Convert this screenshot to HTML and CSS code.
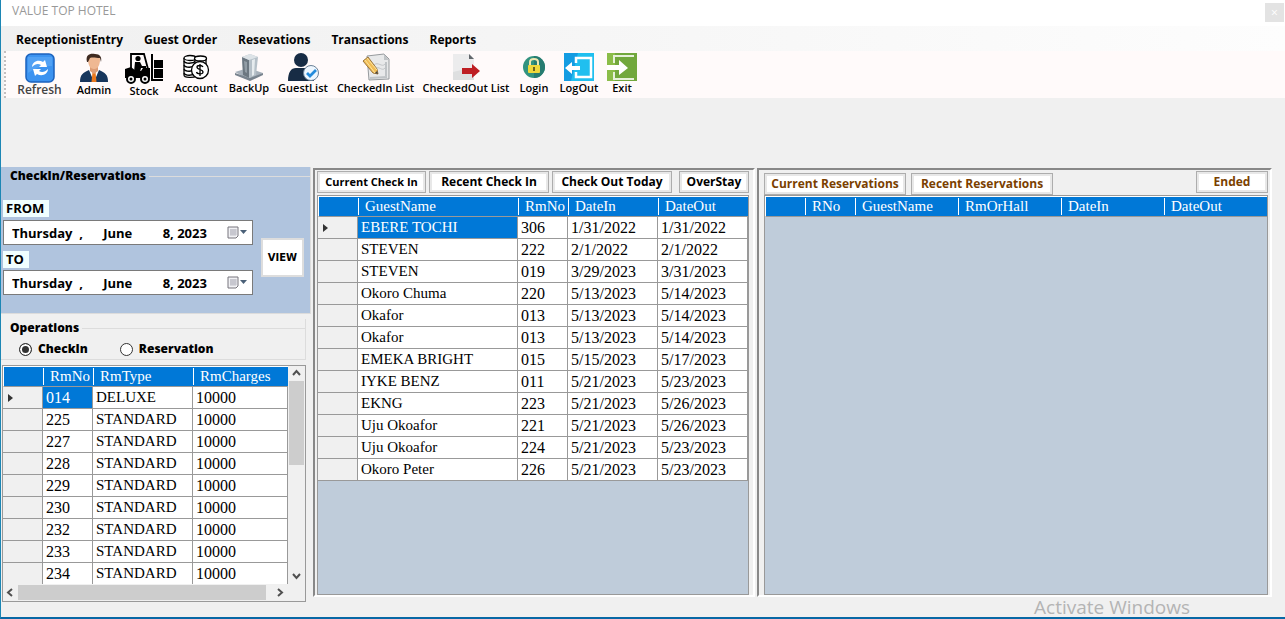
FILE: index.html
```html
<!DOCTYPE html>
<html lang="en">
<head>
<meta charset="UTF-8" />
<meta name="viewport" content="width=device-width, initial-scale=1" />
<title>VALUE TOP HOTEL</title>
<link rel="stylesheet" href="styles.css">
</head>
<body>

<div class="window">
  <header class="titlebar">
    <h1>VALUE TOP HOTEL</h1>
    <button type="button" class="close" aria-label="Close">×</button>
  </header>

  <nav class="menu">
    <a href="#">ReceptionistEntry</a>
    <a href="#">Guest Order</a>
    <a href="#">Resevations</a>
    <a href="#">Transactions</a>
    <a href="#">Reports</a>
  </nav>

  <div class="toolbar">
    <button type="button" class="tool refresh">
      <svg width="30" height="30" viewBox="0 0 30 30">
        <rect x="1" y="1" width="28" height="28" rx="5" fill="#3c93f0" stroke="#1b62bd" stroke-width="1.5"/>
        <path d="M3 4h24v9Q14 12 3 20z" fill="#65b0f8" opacity=".5"/>
        <path d="M7 14c0-5 6-8 11-5l2-2 2 7h-8l2-2c-3-2-6-1-9 2zM23 16c0 5-6 8-11 5l-2 2-2-7h8l-2 2c3 2 6 1 9-2z" fill="#fff"/>
      </svg>
      <span>Refresh</span>
    </button>
    <button type="button" class="tool">
      <svg width="30" height="30" viewBox="0 0 30 30">
        <path d="M1 29c0-8 3-9 9-12h10c6 3 9 4 9 12z" fill="#17365c"/>
        <path d="M10 17l5 12 5-12z" fill="#fff"/>
        <path d="M13.500 19h3l1 10h-5z" fill="#e8781e"/>
        <path d="M11 13h8v5l-4 3-4-3z" fill="#dc9d76"/>
        <path d="M9 6c0-6 12-6 12 0 0 6-2 10-6 10S9 12 9 6z" fill="#efb892"/>
        <path d="M8 9C6 1 12 0 16 1c5 0 7 3 6 8l-1-4c-4 0-7-1-10 0L9 9z" fill="#3f2a20"/>
      </svg>
      <span>Admin</span>
    </button>
    <button type="button" class="tool">
      <svg width="40" height="31" viewBox="0 0 40 31">
        <path d="M7 15V1h13l4 15" fill="none" stroke="#000" stroke-width="1.8"/>
        <circle cx="14" cy="5.500" r="2.600"/>
        <path d="M11 9h5l2 4h4v2h-5l-1 4h-6z"/>
        <path d="M1 16l6-2 5 4h5l2-3h7v10H1z"/>
        <path d="M27 1h2v25h10v2H27z"/>
        <path d="M30 7h9v8h-9zM30 16h9v9h-9z"/>
        <circle cx="7" cy="26" r="4" fill="#fff" stroke="#000" stroke-width="2"/><circle cx="7" cy="26" r="1.500"/>
        <circle cx="21" cy="26" r="4" fill="#fff" stroke="#000" stroke-width="2"/><circle cx="21" cy="26" r="1.500"/>
      </svg>
      <span>Stock</span>
    </button>
    <button type="button" class="tool">
      <svg width="28" height="28" viewBox="0 0 28 28" fill="#fff" stroke="#000" stroke-width="1.300">
        <path d="M2 5v17c0 3 10 3 12 1V5"/>
        <path d="M2 8c1 3 9 3 12 0M2 12c1 3 9 3 12 0M2 16c1 3 9 3 12 0M2 20c1 3 9 3 12 0" fill="none"/>
        <ellipse cx="8" cy="5" rx="6" ry="2.500"/>
        <path d="M13 6v5h11V6" /><ellipse cx="18.500" cy="5.500" rx="6" ry="2.500"/>
        <circle cx="18" cy="17" r="8.500"/>
        <path d="M21 14c-1-2-6-2-6 0 0 3 6 2 6 5 0 3-6 2-6.500 0M18 11v12" fill="none"/>
      </svg>
      <span>Account</span>
    </button>
    <button type="button" class="tool">
      <svg width="30" height="28" viewBox="0 0 30 28">
        <path d="M1 19l13-4 15 5-13 7z" fill="#a6b0ba"/>
        <path d="M1 20l15 5 13-5v2l-13 6-15-6z" fill="#78838e"/>
        <path d="M8 4l8-3 8 3-2 18-7 3-6-3z" fill="#b6c0c8"/>
        <path d="M8 4l7 3v18l-6-3z" fill="#6c7781"/>
        <path d="M8 4l8-3 8 3-9 3z" fill="#dde3e7"/>
        <path d="M18 7l3-1-1 16-2 1z" fill="#e6ebee"/>
        <path d="M10 8l3 1v11l-2-1z" fill="#929da6"/>
      </svg>
      <span>BackUp</span>
    </button>
    <button type="button" class="tool">
      <svg width="31" height="28" viewBox="0 0 31 28">
        <circle cx="13" cy="7" r="7" fill="#172c45"/>
        <path d="M0 28c0-9 3-13 8-13h10c5 0 8 4 8 13z" fill="#172c45"/>
        <circle cx="23" cy="20" r="7.500" fill="#eef7ff" stroke="#6c8298"/>
        <path d="M19 20l3 3 6-6" fill="none" stroke="#248bdb" stroke-width="2.800"/>
      </svg>
      <span>GuestList</span>
    </button>
    <button type="button" class="tool">
      <svg width="28" height="28" viewBox="0 0 28 28">
        <path d="M5 3l17-2 5 5v20l-20 1z" fill="#e8e9ea" stroke="#969a9d"/>
        <path d="M22 1v6h5z" fill="#bfc3c6"/>
        <path d="M8 25l17-1M24 9v14" stroke="#bfc3c6" stroke-width="2"/>
        <path d="M12 12c4-4 8 3 11-1M13 16c4-4 7 3 10-1" stroke="#c3c6c9" fill="none"/>
        <path d="M1 8l5-4 9 12 1 5-5-1z" fill="#f1bd55" stroke="#99733b"/>
        <path d="M3 7l10 13M5 5l10 12" stroke="#ffe5a0"/>
        <path d="M13 20l3 1-1-3z" fill="#444"/>
      </svg>
      <span>CheckedIn List</span>
    </button>
    <button type="button" class="tool">
      <svg width="28" height="28" viewBox="0 0 28 28">
        <path d="M1 1h16l5 5v21H1z" fill="#dedfe0"/>
        <path d="M1 1h16l5 5v8L1 19z" fill="#ececed"/>
        <path d="M17 1v5h5z" fill="#62676c"/>
        <path d="M10 15h10v-4l8 7-8 7v-4H10z" fill="#be1e23"/>
      </svg>
      <span>CheckedOut List</span>
    </button>
    <button type="button" class="tool">
      <svg width="26" height="28" viewBox="0 0 26 28">
        <circle cx="13" cy="14" r="11" fill="#32937f"/>
        <path d="M13 3a11 11 0 0 1 0 22z" fill="#267b70"/>
        <path d="M9 13V9c0-4 8-4 8 0v4" fill="none" stroke="#eee7b1" stroke-width="2"/>
        <rect x="7" y="12" width="12" height="8" rx="1" fill="#efd83a"/>
        <path d="M13 14v4" stroke="#6b651f" stroke-width="2"/>
      </svg>
      <span>Login</span>
    </button>
    <button type="button" class="tool">
      <svg width="30" height="28" viewBox="0 0 30 28">
        <rect width="30" height="28" fill="#149ce2"/>
        <path d="M14 0h16v28H7z" fill="#20bfef"/>
        <path d="M12 10V5h15v19H12v-5" fill="none" stroke="#fff" stroke-width="2.500"/>
        <path d="M1 15l7-6v4h8v4H8v4z" fill="#fff"/>
      </svg>
      <span>LogOut</span>
    </button>
    <button type="button" class="tool">
      <svg width="30" height="28" viewBox="0 0 30 28">
        <rect width="30" height="28" fill="#72a83d"/>
        <path d="M0 0h8v28H0z" fill="#8bbd49"/>
        <path d="M7 10V3h20M7 19v7h20" fill="none" stroke="#e7f1da" stroke-width="2"/>
        <path d="M0 12h12V7l9 8-9 7v-5H0z" fill="#fff"/>
      </svg>
      <span>Exit</span>
    </button>
  </div>

  <main class="content">
    <section class="side">
      <fieldset class="dates">
        <legend>CheckIn/Reservations</legend>
        <div class="dates-fields">
          <label for="from">FROM</label>
          <div class="datebox">
            <input type="text" id="from" value="Thursday  ,      June         8, 2023">
            <button type="button" aria-label="Pick from date">
              <svg width="20" height="14" viewBox="0 0 20 14"><path d="M1 1h10v9l-2 2H1z" fill="#f1f1f4" stroke="#77757c"/><path d="M3 4h7M3 6h7M3 8h7M4 3v7M6 3v7M8 3v7" stroke="#aaa9b5" stroke-width=".7"/><path d="M13 4h7l-3.500 4z" fill="#4b6178"/></svg>
            </button>
          </div>
          <label for="to">TO</label>
          <div class="datebox">
            <input type="text" id="to" value="Thursday  ,      June         8, 2023">
            <button type="button" aria-label="Pick to date">
              <svg width="20" height="14" viewBox="0 0 20 14"><path d="M1 1h10v9l-2 2H1z" fill="#f1f1f4" stroke="#77757c"/><path d="M3 4h7M3 6h7M3 8h7M4 3v7M6 3v7M8 3v7" stroke="#aaa9b5" stroke-width=".7"/><path d="M13 4h7l-3.500 4z" fill="#4b6178"/></svg>
            </button>
          </div>
        </div>
        <button type="button" class="view">VIEW</button>
      </fieldset>

      <fieldset class="operations">
        <legend>Operations</legend>
        <label><input type="radio" name="operation" checked>CheckIn</label>
        <label><input type="radio" name="operation">Reservation</label>
      </fieldset>

      <div class="rooms">
        <div class="rooms-view">
          <table class="grid">
            <colgroup><col class="w40"><col class="w50"><col class="w100"><col></colgroup>
            <thead>
              <tr><th></th><th><span>RmNo</span></th><th><span>RmType</span></th><th><span>RmCharges</span></th></tr>
            </thead>
            <tbody>
              <tr><td class="current"></td><td class="num selected">014</td><td>DELUXE</td><td class="num">10000</td></tr>
              <tr><td></td><td class="num">225</td><td>STANDARD</td><td class="num">10000</td></tr>
              <tr><td></td><td class="num">227</td><td>STANDARD</td><td class="num">10000</td></tr>
              <tr><td></td><td class="num">228</td><td>STANDARD</td><td class="num">10000</td></tr>
              <tr><td></td><td class="num">229</td><td>STANDARD</td><td class="num">10000</td></tr>
              <tr><td></td><td class="num">230</td><td>STANDARD</td><td class="num">10000</td></tr>
              <tr><td></td><td class="num">232</td><td>STANDARD</td><td class="num">10000</td></tr>
              <tr><td></td><td class="num">233</td><td>STANDARD</td><td class="num">10000</td></tr>
              <tr><td></td><td class="num">234</td><td>STANDARD</td><td class="num">10000</td></tr>
            </tbody>
          </table>
        </div>
        <div class="vscroll">
          <svg width="15" height="15" viewBox="0 0 15 15"><path d="M4 9l3.500-4L11 9"/></svg>
          <div class="thumb"></div>
          <svg width="15" height="15" viewBox="0 0 15 15"><path d="M4 5l3.500 4L11 5"/></svg>
        </div>
        <div class="hscroll">
          <svg width="15" height="15" viewBox="0 0 15 15"><path d="M9 4L5 7.500 9 11"/></svg>
          <div class="thumb"></div>
          <svg width="15" height="15" viewBox="0 0 15 15"><path d="M5 4l4 3.500L5 11"/></svg>
        </div>
      </div>
    </section>

    <section class="panel checkins">
      <div class="tabs">
        <button type="button" class="small">Current Check In</button>
        <button type="button">Recent Check In</button>
        <button type="button">Check Out Today</button>
        <button type="button">OverStay</button>
      </div>
      <div class="gridbox">
        <table class="grid">
          <colgroup><col class="w40"><col><col class="w50"><col class="w90"><col class="w90"></colgroup>
          <thead>
            <tr><th></th><th><span>GuestName</span></th><th><span>RmNo</span></th><th><span>DateIn</span></th><th><span>DateOut</span></th></tr>
          </thead>
          <tbody>
            <tr><td class="current"></td><td class="selected">EBERE TOCHI</td><td class="num">306</td><td class="num">1/31/2022</td><td class="num">1/31/2022</td></tr>
            <tr><td></td><td>STEVEN</td><td class="num">222</td><td class="num">2/1/2022</td><td class="num">2/1/2022</td></tr>
            <tr><td></td><td>STEVEN</td><td class="num">019</td><td class="num">3/29/2023</td><td class="num">3/31/2023</td></tr>
            <tr><td></td><td>Okoro Chuma</td><td class="num">220</td><td class="num">5/13/2023</td><td class="num">5/14/2023</td></tr>
            <tr><td></td><td>Okafor</td><td class="num">013</td><td class="num">5/13/2023</td><td class="num">5/14/2023</td></tr>
            <tr><td></td><td>Okafor</td><td class="num">013</td><td class="num">5/13/2023</td><td class="num">5/14/2023</td></tr>
            <tr><td></td><td>EMEKA BRIGHT</td><td class="num">015</td><td class="num">5/15/2023</td><td class="num">5/17/2023</td></tr>
            <tr><td></td><td>IYKE BENZ</td><td class="num">011</td><td class="num">5/21/2023</td><td class="num">5/23/2023</td></tr>
            <tr><td></td><td>EKNG</td><td class="num">223</td><td class="num">5/21/2023</td><td class="num">5/26/2023</td></tr>
            <tr><td></td><td>Uju Okoafor</td><td class="num">221</td><td class="num">5/21/2023</td><td class="num">5/26/2023</td></tr>
            <tr><td></td><td>Uju Okoafor</td><td class="num">224</td><td class="num">5/21/2023</td><td class="num">5/23/2023</td></tr>
            <tr><td></td><td>Okoro Peter</td><td class="num">226</td><td class="num">5/21/2023</td><td class="num">5/23/2023</td></tr>
          </tbody>
        </table>
      </div>
    </section>

    <section class="panel reservations">
      <div class="tabs">
        <button type="button">Current Reservations</button>
        <button type="button">Recent Reservations</button>
        <button type="button" class="ended">Ended</button>
      </div>
      <div class="gridbox">
        <table class="grid">
          <colgroup><col class="w40"><col class="w50"><col><col><col><col></colgroup>
          <thead>
            <tr><th></th><th><span>RNo</span></th><th><span>GuestName</span></th><th><span>RmOrHall</span></th><th><span>DateIn</span></th><th><span>DateOut</span></th></tr>
          </thead>
        </table>
      </div>
    </section>
  </main>

  <footer class="watermark">Activate Windows</footer>
</div>

</body>
</html>
```
FILE: styles.css
```css
* {
  box-sizing: border-box;
}
body {
  margin: 0;
  font-family: "Open Sans", "Noto Sans", sans-serif;
  font-size: 12px;
  color: #000;
}
button {
  font-family: inherit;
  cursor: pointer;
}
.window {
  display: flex;
  flex-direction: column;
  height: 100vh;
  background: #f0f0f0;
  border-left: 1px solid #1c86b4;
  border-bottom: 2px solid #0868a5;
}
.titlebar {
  display: flex;
  justify-content: space-between;
  align-items: flex-start;
  flex: 0 0 26px;
  padding: 3px 1px 0 11px;
  background: #fff;
}
.titlebar h1 {
  margin: 0;
  font-size: 12px;
  line-height: 16px;
  font-weight: 400;
  color: #999;
}
.close {
  width: 19px;
  height: 19px;
  padding: 0;
  border: none;
  background: #e3e3e3;
  color: #fff;
  font-size: 12px;
  line-height: 18px;
}
.menu {
  display: flex;
  align-items: center;
  gap: 21px;
  flex: 0 0 25px;
  padding: 1px 15px 0;
  background: linear-gradient(to right, #f0f0f0, #fdfdfd);
}
.menu a {
  color: #000;
  font-size: 12px;
  font-weight: 700;
  text-decoration: none;
}

/* toolbar */
.toolbar {
  display: grid;
  grid-template-columns: 55px 54px 46px 58px 48px 60px 85px 96px 40px 50px 36px;
  flex: 0 0 46px;
  padding-left: 6px;
  margin-left: 3px;
  background: #fffafa;
  border-left: 2px dotted #c4bfbf;
}
.tool {
  display: flex;
  flex-direction: column;
  align-items: center;
  padding: 2px 0 0;
  border: none;
  background: none;
  color: #000;
  font-size: 11px;
  font-weight: 600;
  line-height: 14px;
  white-space: nowrap;
}
.tool svg {
  flex: none;
}
.tool.refresh {
  color: #444;
  font-size: 12px;
}

.content {
  display: grid;
  grid-template-columns: 312fr 444fr 515fr;
  flex: 1;
  min-height: 0;
  padding: 69px 13px 0 0;
}

/* left column */
.side {
  display: flex;
  flex-direction: column;
  min-height: 0;
}
fieldset {
  margin: 0;
  padding: 0;
  border: none;
}
legend {
  float: left;
  width: 100%;
  display: flex;
  align-items: center;
  gap: 3px;
  padding: 0 0 0 9px;
  font-weight: 800;
  line-height: 18px;
}
legend::after {
  content: "";
  flex: 1;
  border-top: 1px solid #dcdcdc;
}
.dates {
  display: flex;
  flex-wrap: wrap;
  align-items: flex-start;
  flex: 0 0 147px;
  margin-right: 2px;
  background: #b0c4de;
  border-right: 1px solid #dcdcdc;
  border-bottom: 1px solid #dcdcdc;
}
/* keep the fields directly below the legend */
.dates, .operations {
  align-content: flex-start;
}
.dates-fields {
  display: flex;
  flex-direction: column;
  align-items: flex-start;
  flex: 1;
  padding: 15px 0 0 2px;
}
.dates-fields label {
  padding: 0 5px 0 3px;
  background: #f0ffff;
  font-size: 13px;
  font-weight: 700;
  line-height: 17px;
}
.datebox {
  display: flex;
  align-items: center;
  width: 100%;
  height: 25px;
  margin: 3px 0 6px;
  padding-right: 5px;
  background: #fff;
  border: 1px solid #7a7a7a;
}
.datebox:last-child {
  margin-top: 2px;
}
.datebox input {
  flex: 1;
  min-width: 0;
  padding: 0 0 0 8px;
  border: none;
  background: none;
  font-family: inherit;
  font-size: 13px;
  font-weight: 700;
}
.datebox button {
  display: flex;
  padding: 0;
  border: none;
  background: none;
}
.view {
  width: 43px;
  height: 39px;
  margin: 53px 6px 0 8px;
  padding: 0;
  border: 2px solid #ddd;
  background: #fff;
  font-family: "DejaVu Sans", sans-serif;
  font-size: 10px;
  font-weight: 700;
}
.operations {
  display: flex;
  flex-wrap: wrap;
  align-items: center;
  flex: 0 0 41px;
  margin: 5px 7px 0 0;
  border-right: 1px solid #dcdcdc;
  border-bottom: 1px solid #dcdcdc;
}
.operations label {
  display: flex;
  align-items: center;
  gap: 6px;
  margin: 4px 32px 0 0;
  font-weight: 800;
  line-height: 16px;
}
.operations legend + label {
  margin-left: 18px;
}
.operations input {
  appearance: none;
  width: 13px;
  height: 13px;
  margin: 0;
  border: 1px solid #333;
  border-radius: 50%;
  background: #fff;
}
.operations input:checked {
  background: #333;
  box-shadow: inset 0 0 0 2px #fff;
}
.rooms {
  display: grid;
  grid-template-columns: 1fr 17px;
  grid-template-rows: 1fr 17px;
  flex: 1;
  min-height: 0;
  margin: 5px 7px 0 1px;
  border: 1px solid #999;
}
.rooms-view {
  overflow: hidden;
}
.vscroll {
  display: flex;
  flex-direction: column;
  align-items: center;
  justify-content: space-between;
}
.vscroll .thumb {
  width: 15px;
  height: 84px;
  margin-bottom: auto;
  background: #cdcdcd;
}
.hscroll {
  grid-column: 1;
  display: flex;
  align-items: center;
}
.hscroll .thumb {
  flex: 1;
  height: 15px;
  margin-right: 7px;
  background: #cdcdcd;
}
.vscroll svg, .hscroll svg {
  flex: none;
  fill: none;
  stroke: #505050;
  stroke-width: 2;
}

/* panels with tabs */
.panel {
  display: flex;
  flex-direction: column;
  min-height: 0;
  margin: 1px 2px 5px 0;
  border: 2px solid #fff;
  border-top-color: #888;
  border-left-color: #888;
}
.checkins {
  padding: 1px 4px 0 2px;
}
.reservations {
  margin-right: 0;
  padding: 1px 2px 0 5px;
}
.tabs {
  display: flex;
  align-items: flex-end;
  gap: 3px;
  height: 24px;
}
.checkins .tabs {
  padding-bottom: 2px;
}
.tabs button {
  height: 22px;
  padding: 0;
  border: 1px solid #adadad;
  outline: 2px solid #e8e8e8;
  outline-offset: -3px;
  background: #fff;
  color: #000;
  font-size: 12px;
  font-weight: 700;
  line-height: 18px;
  white-space: nowrap;
}
.checkins .tabs button {
  flex: 0 0 120px;
}
.checkins .tabs .small {
  flex-basis: 109px;
  font-size: 11px;
}
.checkins .tabs button:last-child {
  flex-basis: 70px;
  margin-left: auto;
}
.reservations .tabs {
  gap: 5px;
}
.reservations .tabs button {
  flex: 0 0 142px;
  color: #7b3f00;
}
.reservations .tabs .ended {
  flex-basis: 72px;
  align-self: flex-start;
  margin-left: auto;
}
.gridbox {
  flex: 1;
  min-height: 0;
  overflow: hidden;
  background: #bfccda;
  border: 1px solid #999;
}

/* data grids */
.grid {
  width: 100%;
  table-layout: fixed;
  border-collapse: separate;
  border-spacing: 0;
  font-family: Georgia, "Liberation Serif", serif;
  font-size: 15px;
}
.grid th {
  height: 21px;
  padding: 1px 0;
  background: #0078d7;
  border-top: 1px solid #fff;
  border-bottom: 1px solid #999;
  color: #fff;
  font-weight: 400;
  text-align: left;
  line-height: 17px;
}
.grid th:first-child {
  border-left: 1px solid #fff;
}
.grid th span {
  display: block;
  padding-left: 6px;
  border-left: 1px solid #fff;
}
.grid td {
  height: 22px;
  padding: 0 0 0 3px;
  background: #fff;
  border-right: 1px solid #999;
  border-bottom: 1px solid #999;
  line-height: 21px;
  white-space: nowrap;
}
.grid td.num {
  font-size: 16px;
}
.grid td:first-child {
  background: #f0f0f0;
}
.grid td.selected {
  background: #0078d7;
  color: #fff;
}
.grid td.current::before {
  content: "";
  display: block;
  width: 0;
  margin-left: 2px;
  border: 4px solid transparent;
  border-left: 5px solid #333;
  border-right: none;
}
.w40 {
  width: 40px;
}
.w50 {
  width: 50px;
}
.w90 {
  width: 90px;
}
.w100 {
  width: 100px;
}

.watermark {
  flex: 0 0 15px;
  padding-right: 95px;
  color: #b4b4b4;
  font-size: 19px;
  line-height: 11px;
  text-align: right;
}
```
